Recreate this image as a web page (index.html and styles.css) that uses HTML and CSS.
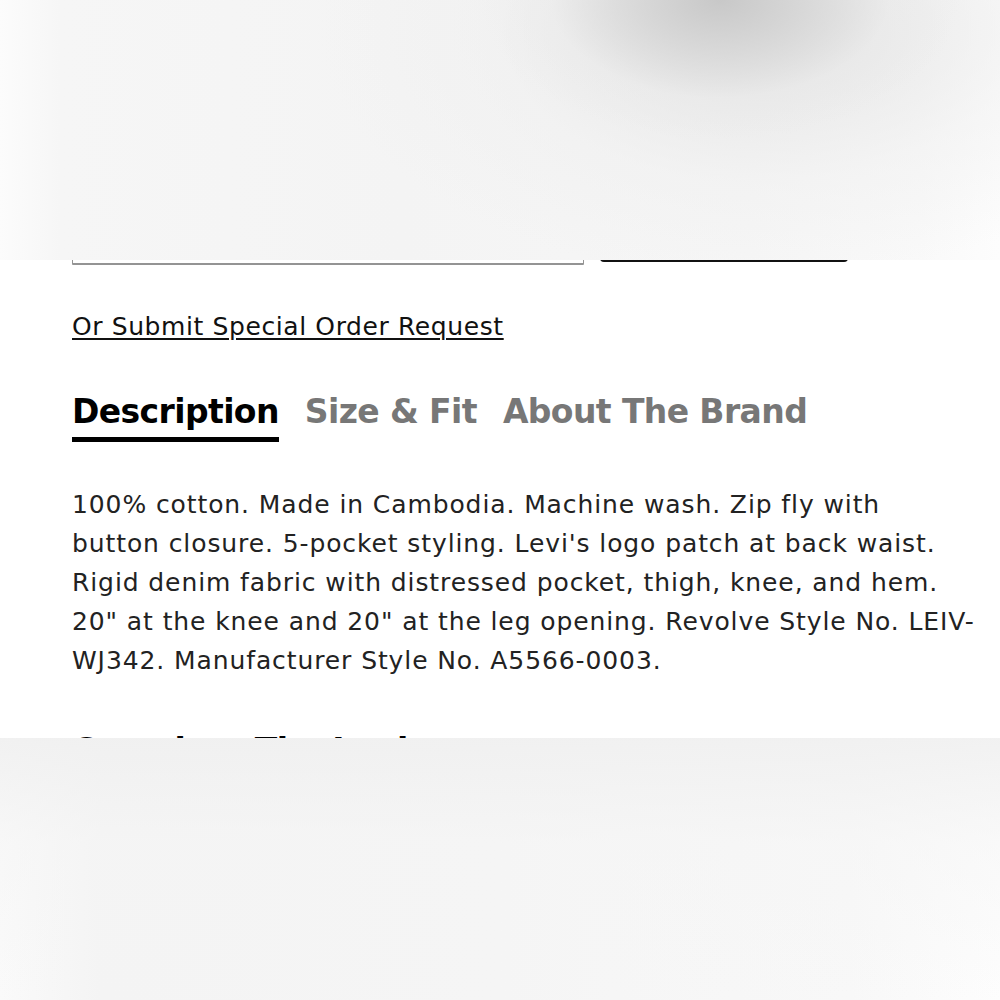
FILE: index.html
```html
<!DOCTYPE html>
<html lang="en">
<head>
<meta charset="utf-8">
<title>Product details</title>
<link rel="stylesheet" href="styles.css">
</head>
<body>
<main class="page">
  <div class="order-row">
    <div class="size-select"></div>
    <button class="add-btn" type="button"></button>
  </div>
  <a class="special-link" href="#">Or Submit Special Order Request</a>
  <nav class="tabs">
    <span class="tab tab-active">Description</span>
    <span class="tab">Size &amp; Fit</span>
    <span class="tab">About The Brand</span>
  </nav>
  <p class="desc">100% cotton. Made in Cambodia. Machine wash. Zip fly with<br>button closure. 5-pocket styling. Levi's logo patch at back waist. Rigid denim fabric with distressed pocket, thigh, knee, and hem. 20" at the knee and 20" at the leg opening. Revolve Style No. LEIV-WJ342. Manufacturer Style No. A5566-0003.</p>
  <h2 class="section-title">Complete The Look</h2>
</main>
<div class="blur blur-top"></div>
<div class="blur blur-bottom"></div>
</body>
</html>
```
FILE: styles.css
```css
html, body {
  margin: 0;
  padding: 0;
  background: #ffffff;
  overflow: hidden;
}

body {
  font-family: "DejaVu Sans", "Noto Sans", sans-serif;
  color: #111111;
}

.page {
  display: flex;
  flex-direction: column;
  align-items: flex-start;
  padding: 208px 8px 0 72px;
}

.order-row {
  display: flex;
  gap: 16px;
  height: 56px;
}

.size-select {
  width: 510px;
  height: 54px;
  border: 1px solid #949494;
  border-bottom-width: 2px;
  border-radius: 0 0 1px 1px;
  background: #ffffff;
}

.add-btn {
  width: 248px;
  height: 54px;
  border: none;
  border-radius: 4px;
  background: #111111;
}

.special-link {
  margin-top: 48px;
  font-size: 25px;
  line-height: 30px;
  letter-spacing: 0.6px;
  color: #111111;
  text-decoration: underline;
  text-decoration-thickness: 1.5px;
  text-underline-offset: 3px;
}

.tabs {
  display: flex;
  gap: 26px;
  margin-top: 50px;
}

.tab {
  font-size: 33px;
  line-height: 40px;
  font-weight: 700;
  letter-spacing: -0.6px;
  color: #777777;
  padding-bottom: 5px;
  border-bottom: 5px solid transparent;
}

.tab-active {
  color: #000000;
  border-bottom-color: #000000;
}

.desc {
  margin: 43px 0 0 0;
  max-width: 918px;
  font-size: 25px;
  line-height: 39px;
  letter-spacing: 0.9px;
  color: #222222;
}

.section-title {
  margin: 51px 0 0 0;
  font-size: 33px;
  line-height: 40px;
  font-weight: 700;
  letter-spacing: -0.6px;
  color: #000000;
}

.blur {
  position: fixed;
  left: 0;
  width: 100%;
}

.blur-top {
  top: 0;
  height: 260px;
  background:
    radial-gradient(ellipse 240px 140px at 720px 0px, rgba(200,200,200,1) 0%, rgba(212,212,212,0.8) 35%, rgba(232,232,232,0.35) 70%, rgba(245,245,245,0) 100%),
    radial-gradient(ellipse 440px 250px at 760px 30px, rgba(226,226,226,0.9) 0%, rgba(238,238,238,0.45) 60%, rgba(246,246,246,0) 100%),
    linear-gradient(90deg, #fcfcfc 0%, #f6f6f6 6%, #f4f4f4 40%, #f6f6f6 75%, #f9f9f9 92%, #fdfdfd 100%);
}

.blur-bottom {
  top: 738px;
  height: 262px;
  background:
    linear-gradient(180deg, rgba(240,240,240,0.9) 0%, rgba(245,245,245,0.5) 40%, rgba(250,250,250,0) 100%),
    linear-gradient(90deg, #fafafa 0%, #f4f4f4 10%, #f5f5f5 50%, #f8f8f8 85%, #fdfdfd 100%);
}
```
